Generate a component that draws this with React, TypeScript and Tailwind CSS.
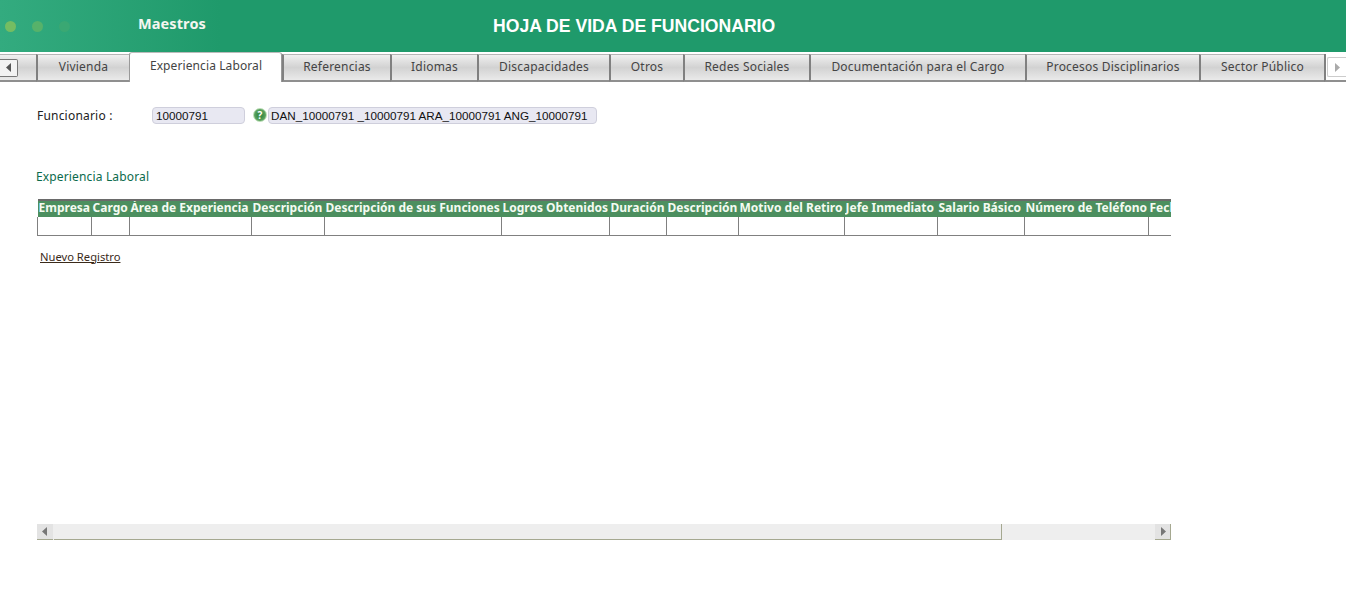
const TABS = [
  { nombre: "Vivienda", ancho: 93 },
  { nombre: "Experiencia Laboral", ancho: 153, activa: true },
  { nombre: "Referencias", ancho: 108 },
  { nombre: "Idiomas", ancho: 87 },
  { nombre: "Discapacidades", ancho: 132 },
  { nombre: "Otros", ancho: 74 },
  { nombre: "Redes Sociales", ancho: 126 },
  { nombre: "Documentación para el Cargo", ancho: 216 },
  { nombre: "Procesos Disciplinarios", ancho: 174 },
  { nombre: "Sector Público", ancho: 125 },
];

const COLUMNAS = [
  { nombre: "Empresa", ancho: 54 },
  { nombre: "Cargo", ancho: 38 },
  { nombre: "Área de Experiencia", ancho: 122 },
  { nombre: "Descripción", ancho: 73 },
  { nombre: "Descripción de sus Funciones", ancho: 177 },
  { nombre: "Logros Obtenidos", ancho: 108 },
  { nombre: "Duración", ancho: 57 },
  { nombre: "Descripción", ancho: 72 },
  { nombre: "Motivo del Retiro", ancho: 106 },
  { nombre: "Jefe Inmediato", ancho: 93 },
  { nombre: "Salario Básico", ancho: 87 },
  { nombre: "Número de Teléfono", ancho: 124 },
  { nombre: "Fecha", ancho: 60 },
];

function Flecha({ dir }: { dir: "izq" | "der" }) {
  return (
    <svg width="6" height="9" viewBox="0 0 6 9">
      <path d={dir === "izq" ? "M5 0v9L0 4.5z" : "M1 0v9l5-4.5z"} fill="currentColor" />
    </svg>
  );
}

function Pestana({ nombre, ancho, activa }: { nombre: string; ancho: number; activa?: boolean }) {
  if (activa) {
    return (
      <div
        style={{ width: ancho }}
        className="relative z-10 -mt-[2px] flex h-[30px] shrink-0 items-center justify-center rounded-t-[3px] border-x border-t border-x-[#999] border-t-[#bbb] bg-white pb-[3px] pl-[1px] tracking-[0.1px] text-[#444]"
      >
        {nombre}
      </div>
    );
  }
  return (
    <div
      style={{ width: ancho }}
      className="flex h-[28px] shrink-0 items-center justify-center border-t border-b-2 border-l-2 border-t-[#b5b5b5] border-b-[#8f8f8f] border-l-[#808080] bg-gradient-to-b from-[#f0f0f0] via-[#d2d2d2] to-[#eaeaea] pb-[1px] tracking-[0.2px] text-[#444]"
    >
      {nombre}
    </div>
  );
}

export default function App() {
  return (
    <div className="min-h-[589px] bg-white font-['Noto_Sans',sans-serif] text-[12px]">
      <header className="relative flex h-[52px] items-center overflow-hidden bg-[#1f9a6b]">
        <div className="absolute inset-y-0 left-0 w-[220px] bg-gradient-to-r from-[#33ab7f] to-[#1f9a6b]" />
        <div className="relative flex w-[138px] items-center gap-[16px] pl-[5px]">
          <span className="size-[11px] rounded-full bg-[#74bd62]" />
          <span className="size-[11px] rounded-full bg-[#57b26a]" />
          <span className="size-[11px] rounded-full bg-[#3aa873]" />
        </div>
        <span className="relative mb-[5px] w-[355px] text-[14.5px] font-bold tracking-[0.1px] text-[#f4f6f0]">
          Maestros
        </span>
        <h1 className="relative font-['Liberation_Sans',sans-serif] text-[17.6px] font-bold text-white">
          HOJA DE VIDA DE FUNCIONARIO
        </h1>
      </header>

      <nav className="mt-[2px] flex h-[28px] items-start">
        <div className="flex h-[28px] w-[36px] shrink-0 items-center border-t border-b-2 border-t-[#b5b5b5] border-b-[#8f8f8f] bg-gradient-to-b from-[#f0f0f0] via-[#d2d2d2] to-[#eaeaea]">
          <div className="flex h-[18px] w-[18px] items-center justify-center rounded-r-[2px] border border-l-0 border-[#777] bg-[#f2f2f2] text-[#555]">
            <Flecha dir="izq" />
          </div>
        </div>
        {TABS.map((t) => (
          <Pestana key={t.nombre} {...t} />
        ))}
        <div className="flex h-[28px] flex-1 items-center border-b-2 border-l-2 border-b-[#8f8f8f] border-l-[#808080] pl-[1px]">
          <div className="flex h-[20px] w-full items-center justify-center rounded-l-[2px] border border-r-0 border-[#ccc] text-[#aaa]">
            <Flecha dir="der" />
          </div>
        </div>
      </nav>

      <main className="pl-[37px]">
        <div className="flex items-start pt-[25px] text-[#222]">
          <span className="w-[115px] tracking-[0.2px]">Funcionario :</span>
          <div className="flex h-[17px] w-[93px] items-center rounded-[4px] border border-[#cfcfdc] bg-[#e8e8f2] pl-[3px] font-['Liberation_Sans',sans-serif] text-[11.7px] text-[#111]">
            10000791
          </div>
          <span className="mt-px ml-[8px] flex size-[14px] items-center justify-center rounded-full border border-[#b9dcb4] bg-[radial-gradient(circle,#3f8f4a_35%,#7fbd7c_100%)] text-[10px] leading-none font-bold text-white">
            ?
          </span>
          <div className="ml-px flex h-[17px] w-[329px] items-center rounded-[4px] border border-[#cfcfdc] bg-[#e8e8f2] pl-[2px] font-['Liberation_Sans',sans-serif] text-[11.7px] whitespace-nowrap text-[#111]">
            DAN_10000791 _10000791 ARA_10000791 ANG_10000791
          </div>
        </div>

        <h2 className="mt-[43px] -ml-px leading-[17px] tracking-[0.15px] text-[#0b6b4c]">Experiencia Laboral</h2>

        <div className="mt-[14px] w-[1134px] overflow-hidden">
          <table className="w-max table-fixed border-collapse">
            <thead>
              <tr>
                {COLUMNAS.map((c, i) => (
                  <th
                    key={i}
                    style={{ width: c.ancho, minWidth: c.ancho }}
                    className="h-[17px] overflow-hidden border-t-2 border-t-[#6a6a6a] bg-[#4c8f5f] px-px pb-[3px] text-left leading-none font-bold whitespace-nowrap text-[#f4fbf2]"
                  >
                    {c.nombre}
                  </th>
                ))}
              </tr>
            </thead>
            <tbody>
              <tr>
                {COLUMNAS.map((c, i) => (
                  <td key={i} className="h-[18px] border border-t-0 border-[#808080]" />
                ))}
              </tr>
            </tbody>
          </table>
        </div>

        <a href="#" className="mt-[12px] ml-[3px] inline-block text-[11.2px] leading-[17px] text-[#3a2a1a] underline">
          Nuevo Registro
        </a>

        <div className="mt-[258px] flex h-[16px] w-[1134px] bg-[#eeeeee]">
          <div className="flex w-[16px] items-center justify-center border-b border-[#a5a890] bg-[#e3e3e3] text-[#777]">
            <Flecha dir="izq" />
          </div>
          <div className="ml-px w-[948px] border-r border-b border-[#a5a890] bg-[#eeeeee]" />
          <div className="flex-1" />
          <div className="flex w-[16px] items-center justify-center border-r border-b border-[#a5a890] bg-[#e3e3e3] text-[#777]">
            <Flecha dir="der" />
          </div>
        </div>
      </main>
    </div>
  );
}
